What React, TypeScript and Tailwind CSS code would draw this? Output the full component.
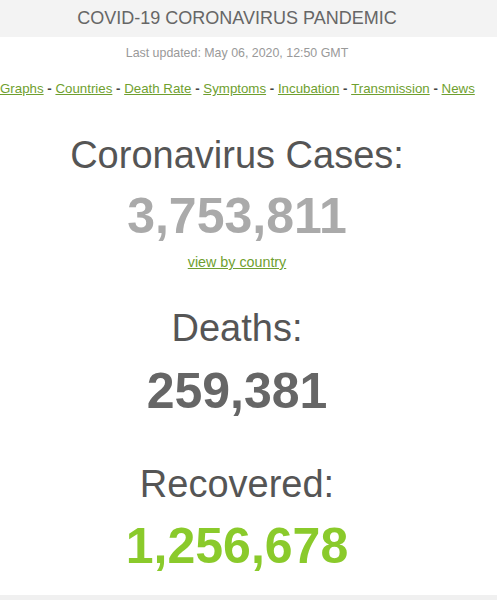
import React from "react";

const links = ["Graphs", "Countries", "Death Rate", "Symptoms", "Incubation", "Transmission", "News"];

function Counter({
  label,
  value,
  valueClass,
  valueTop,
}: {
  label: string;
  value: string;
  valueClass: string;
  valueTop: string;
}) {
  return (
    <div className="flex flex-col items-center">
      <h1 className="text-[38px] leading-[40px] font-normal text-[#555555]">{label}</h1>
      <div className={`${valueTop} text-[50px] leading-[50px] font-bold ${valueClass}`}>{value}</div>
    </div>
  );
}

export default function App() {
  return (
    <div
      className="min-h-[600px] w-[497px] bg-white flex flex-col"
      style={{ fontFamily: '"Liberation Sans", Arial, Helvetica, sans-serif' }}
    >
      <div className="bg-[#f3f3f3] h-[37px] w-full">
        <div className="w-[474px] text-center text-[18px] leading-[37px] text-[#666666]">
          COVID-19 CORONAVIRUS PANDEMIC
        </div>
      </div>

      <div className="w-[474px] flex flex-col items-center">
        <div className="mt-[8px] text-[12.4px] leading-[16px] text-[#999999]">
          Last updated: May 06, 2020, 12:50 GMT
        </div>

        <div className="mt-[18px] text-[13.3px] leading-[20px] text-[#333333] whitespace-nowrap self-start">
          {links.map((l, i) => (
            <React.Fragment key={l}>
              {i > 0 && <span className="font-bold text-[#444444]"> - </span>}
              <a href="#" className="text-[#6f9f2f] underline">
                {l}
              </a>
            </React.Fragment>
          ))}
        </div>

        <div className="mt-[36px]">
          <Counter label="Coronavirus Cases:" value="3,753,811" valueClass="text-[#aaaaaa]" valueTop="mt-[16px]" />
        </div>
        <a href="#" className="mt-[12px] text-[14.3px] leading-[18px] text-[#6f9f2f] underline">
          view by country
        </a>

        <div className="mt-[37px]">
          <Counter label="Deaths:" value="259,381" valueClass="text-[#666666]" valueTop="mt-[18px]" />
        </div>

        <div className="mt-[48px]">
          <Counter label="Recovered:" value="1,256,678" valueClass="text-[#8aca2b]" valueTop="mt-[17px]" />
        </div>
      </div>

      <div className="mt-auto h-[5px] w-full bg-[#f0f0f0]" />
    </div>
  );
}
